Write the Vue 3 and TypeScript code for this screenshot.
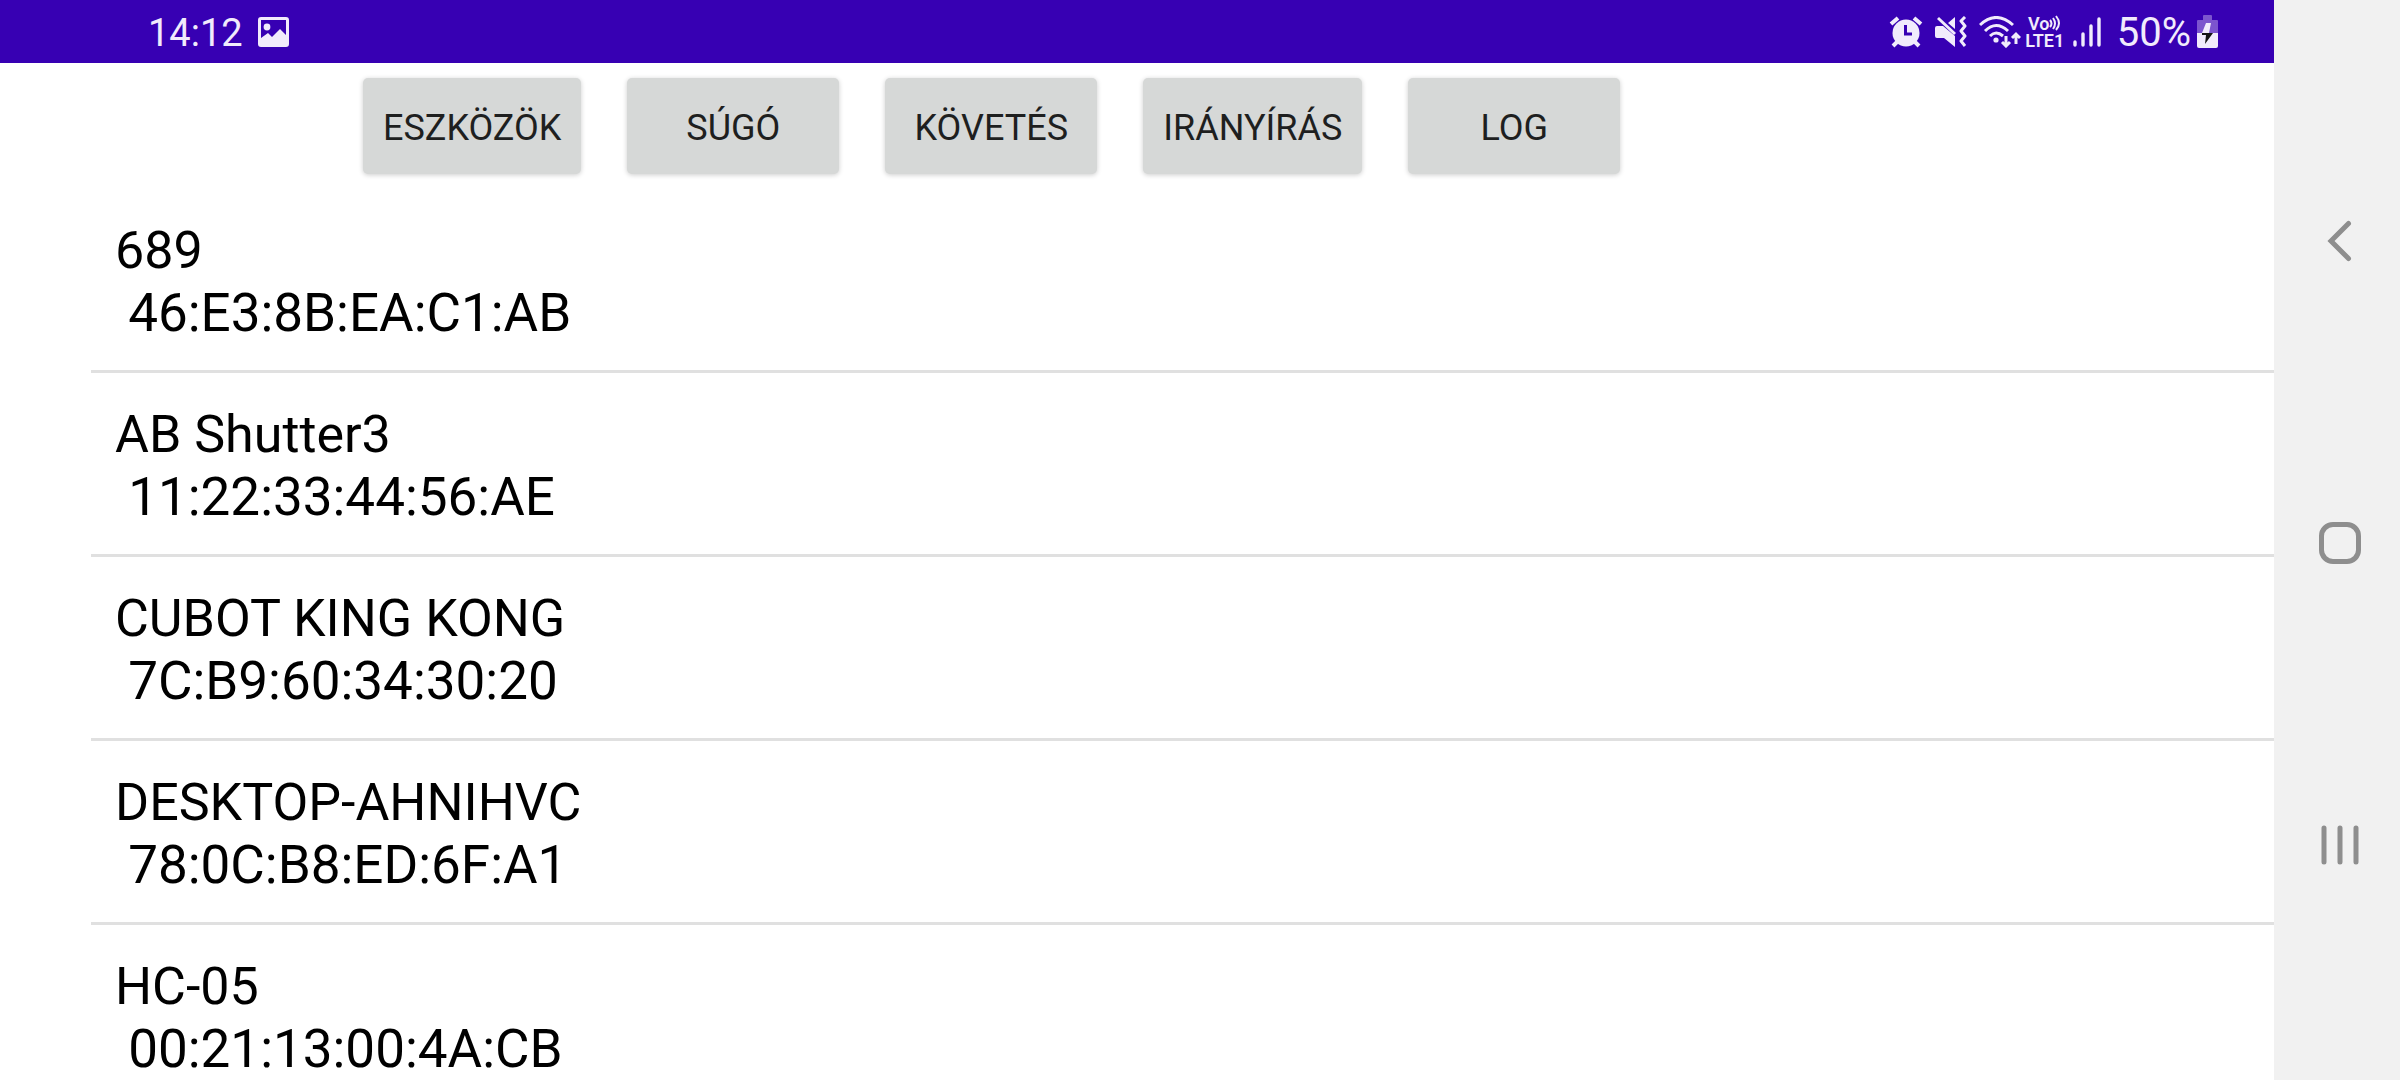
<script setup lang="ts">
interface Device {
  name: string
  address: string
}

const actions: string[] = ['ESZKÖZÖK', 'SÚGÓ', 'KÖVETÉS', 'IRÁNYÍRÁS', 'LOG']

const devices: Device[] = [
  { name: '689', address: '46:E3:8B:EA:C1:AB' },
  { name: 'AB Shutter3', address: '11:22:33:44:56:AE' },
  { name: 'CUBOT KING KONG', address: '7C:B9:60:34:30:20' },
  { name: 'DESKTOP-AHNIHVC', address: '78:0C:B8:ED:6F:A1' },
  { name: 'HC-05', address: '00:21:13:00:4A:CB' },
]
</script>

<template>
  <div class="screen">
    <div class="app">
      <header class="status">
        <div class="status-left">
          <span class="status-text">14:12</span>
          <svg class="picture" width="31" height="30" viewBox="0 0 31 30" aria-hidden="true">
            <path fill="currentColor" fill-rule="evenodd" d="M3 0H28Q31 0 31 3V27Q31 30 28 30H3Q0 30 0 27V3Q0 0 3 0ZM3 3V21L10 16L14 20L22 12L28 18V3Z" />
            <circle cx="9" cy="10" r="3.4" fill="currentColor" />
          </svg>
        </div>
        <div class="status-right">
          <svg width="34" height="32" viewBox="0 0 34 32" aria-hidden="true">
            <g fill="none" stroke="currentColor" stroke-width="4">
              <path d="M2 8L9 2M32 8L25 2M8 26L4 30M26 26L30 30" />
            </g>
            <circle cx="17" cy="17" r="13.5" fill="currentColor" />
            <path d="M16.500 9V18H23" fill="none" stroke="#3700b3" stroke-width="3" />
          </svg>
          <svg width="32" height="32" viewBox="0 0 32 32" aria-hidden="true">
            <path fill="currentColor" d="M0 12Q0 10 2 10H8L20 20V31L9 22H2Q0 22 0 20ZM13 7L20 1V13Z" />
            <path d="M3 2L20 18" stroke="currentColor" stroke-width="3" />
            <path d="M30 1L26 5L30 10L26 15L30 20L26 25L30 30" fill="none" stroke="currentColor" stroke-width="3" stroke-linejoin="round" />
          </svg>
          <svg width="42" height="32" viewBox="0 0 42 32" aria-hidden="true">
            <g fill="none" stroke="currentColor" stroke-width="3">
              <path d="M1 9Q17 -6 34 9M6 15Q17 4 29 15M11 20Q17 14 24 20" />
              <path d="M27 20V30M23 26L27 30L31 26M37 28V18M33 22L37 18L41 22" />
            </g>
            <circle cx="17" cy="24" r="2.600" fill="currentColor" />
          </svg>
          <div class="volte">
            <span class="volte-line">
              Vo<svg width="12" height="16" viewBox="0 0 12 16" aria-hidden="true">
                <path d="M1 5Q4 8.500 1 12M4 3Q8 8.500 4 14M7 1Q13 8.500 7 15" fill="none" stroke="currentColor" stroke-width="2" />
              </svg>
            </span>
            <span class="volte-line">LTE1</span>
          </div>
          <svg class="signal" width="28" height="30" viewBox="0 0 28 30" aria-hidden="true">
            <path d="M2 25V28M10 17V28M18 9V28M26 2V28" stroke="currentColor" stroke-width="3.400" stroke-linecap="round" />
          </svg>
          <span class="status-text charge">50%</span>
          <svg class="battery" width="21" height="33" viewBox="0 0 21 33" aria-hidden="true">
            <path d="M6 5V1Q6 0 7 0H14Q15 0 15 1V5H20Q21 5 21 6V18H0V6Q0 5 1 5Z" fill="#7c55ce" />
            <path d="M0 18H21V31Q21 33 19 33H2Q0 33 0 31Z" fill="currentColor" />
            <path d="M9 8H14L12 18H5Z" fill="currentColor" />
            <path d="M5 18H16L8 29L9 20H5Z" fill="#141414" />
          </svg>
        </div>
      </header>

      <nav class="actions">
        <button v-for="label in actions" :key="label" class="action" type="button">{{ label }}</button>
      </nav>

      <ul class="devices">
        <li v-for="device in devices" :key="device.address" class="device">
          <span class="line">{{ device.name }}</span>
          <span class="line address">{{ ' ' + device.address }}</span>
        </li>
      </ul>
    </div>

    <aside class="navbar">
      <button class="nav-button" type="button" aria-label="Vissza">
        <svg width="44" height="44" viewBox="0 0 44 44">
          <path d="M30.500 4.500L13 22L30.500 39.500" fill="none" stroke="currentColor" stroke-width="5" stroke-linecap="round" />
        </svg>
      </button>
      <button class="nav-button" type="button" aria-label="Kezdőképernyő">
        <svg width="44" height="44" viewBox="0 0 44 44">
          <rect x="3.500" y="3.500" width="37" height="37" rx="11.500" fill="none" stroke="currentColor" stroke-width="5" />
        </svg>
      </button>
      <button class="nav-button" type="button" aria-label="Legutóbbiak">
        <svg width="44" height="44" viewBox="0 0 44 44">
          <path d="M6 5V39M22 5V39M38 5V39" stroke="currentColor" stroke-width="5" stroke-linecap="round" />
        </svg>
      </button>
    </aside>
  </div>
</template>

<style>
body {
  margin: 0;
  background: #fff;
}
</style>

<style scoped>
.screen {
  display: flex;
  height: 100vh;
  overflow: hidden;
  background: #fff;
  font-family: Roboto, "Noto Sans", sans-serif;
  color: #000;
}

.app {
  flex: 1;
  min-width: 0;
}

.status {
  display: flex;
  justify-content: space-between;
  box-sizing: border-box;
  height: 63px;
  padding: 0 56px 0 148px;
  background: #3700b3;
  color: #f1ebfc;
}

.status-left,
.status-right {
  display: flex;
  align-items: center;
}

.status-right {
  gap: 12px;
}

.status svg {
  display: block;
  flex: none;
}

.status-text {
  padding-top: 2px;
  font-size: 38px;
  line-height: 64px;
}

.charge {
  font-size: 40px;
}

.picture {
  margin-left: 15px;
}

.volte {
  display: flex;
  flex-direction: column;
  width: 40px;
  margin-left: -8px;
  font-size: 18px;
  font-weight: 600;
  line-height: 17px;
}

.volte-line {
  display: flex;
  justify-content: center;
}

.signal {
  margin: 0 4px 0 -4px;
}

.battery {
  margin-left: -6px;
}

.actions {
  display: flex;
  gap: 46px;
  padding: 15px 0 15px 363px;
}

.action {
  min-width: 212px;
  height: 96px;
  padding: 3px 20px 0;
  border: 0;
  border-radius: 5px;
  background: #d6d8d7;
  box-shadow: 0 1px 5px rgba(0, 0, 0, 0.2);
  color: #1e1f1f;
  font-family: inherit;
  font-size: 36px;
  line-height: 42px;
}

.devices {
  margin: 0 0 0 91px;
  padding: 0;
  list-style: none;
}

.device {
  padding: 31px 24px 26px;
  border-bottom: 3px solid #e0e0e0;
}

.line {
  display: block;
  font-size: 52px;
  line-height: 62px;
  white-space: pre;
}

.address {
  font-size: 53px;
}

.navbar {
  display: flex;
  flex: none;
  flex-direction: column;
  justify-content: center;
  box-sizing: border-box;
  width: 126px;
  padding: 6px 0 0 6px;
  background: #f1f1f1;
}

.nav-button {
  display: flex;
  flex: 0 0 28vh;
  align-items: center;
  justify-content: center;
  padding: 0;
  border: 0;
  background: none;
  color: #8e8e8e;
}
</style>
